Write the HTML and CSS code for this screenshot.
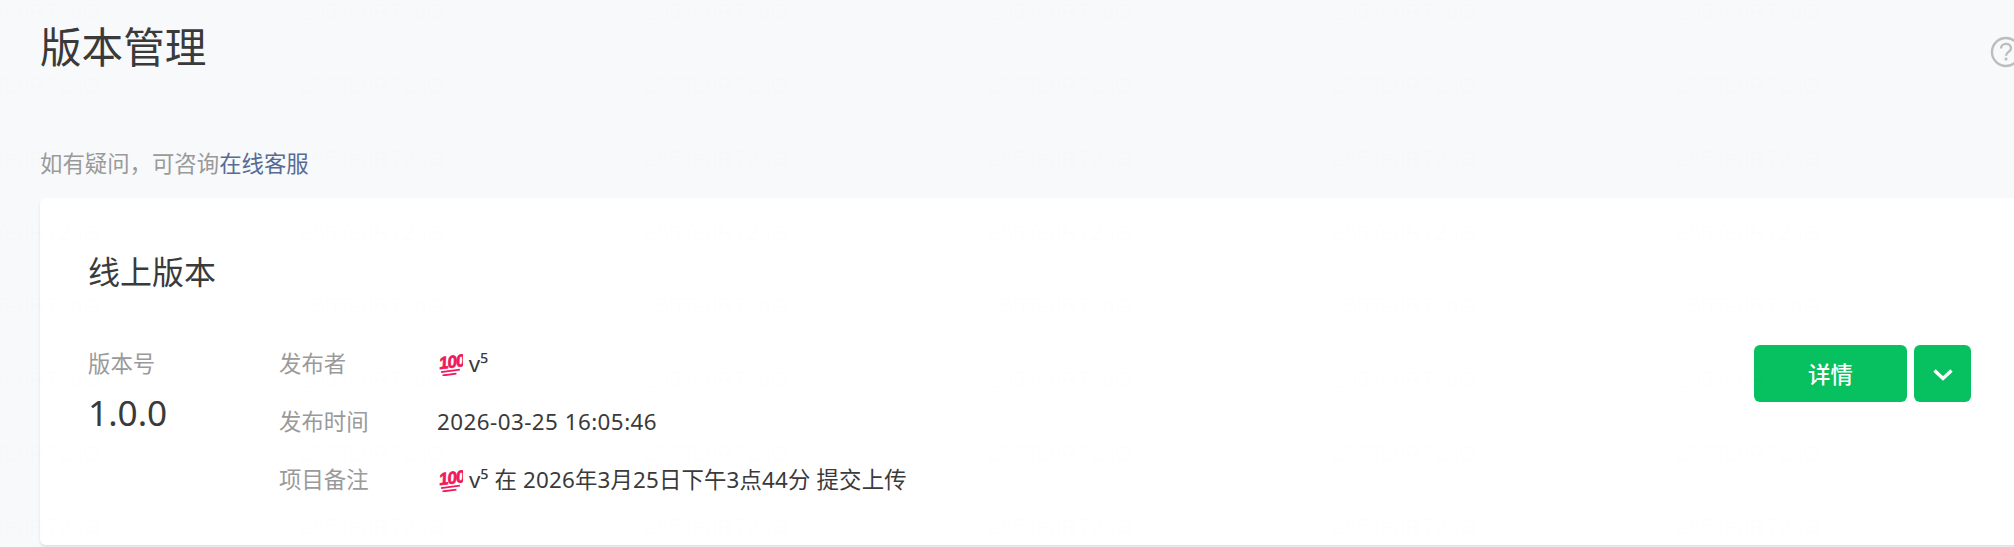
FILE: index.html
```html
<!DOCTYPE html>
<html lang="zh-CN">
<head>
    <meta charset="UTF-8">
    <title>版本管理</title>
    <link rel="stylesheet" href="styles.css">
</head>
<body>
    <div class="page">
        <div class="page-head">
            <h1>版本管理</h1>
            <svg class="help-icon" width="32" height="32" viewBox="0 0 32 32" fill="none" stroke="#bdbdbd">
                <circle cx="16" cy="16" r="14" stroke-width="2.4"/>
                <path d="M11 12.5c0-2.8 2.2-4.6 5-4.6s5 1.7 5 4.3c0 3.6-5 3.8-5 7.6" stroke-width="2.4"/>
                <path d="M16 21.6v2.8" stroke-width="2.8"/>
            </svg>
        </div>
        <p class="tip">如有疑问，可咨询<a class="tip-link">在线客服</a></p>
        <div class="card">
            <h2>线上版本</h2>
            <div class="card-body">
                <div class="version">
                    <div class="label">版本号</div>
                    <div class="version-num">1.0.0</div>
                </div>
                <div class="info">
                    <div class="info-row">
                        <span class="label info-label">发布者</span>
                        <span class="info-value"><svg class="emoji" width="26" height="24" viewBox="0 0 26 24"><g transform="rotate(-8 12 12)"><text x="2" y="16" class="emoji-text">100</text><path d="M3 19h19M4 22.5h14"/></g></svg> v⁵</span>
                    </div>
                    <div class="info-row">
                        <span class="label info-label">发布时间</span>
                        <span class="info-value info-date">2026-03-25 16:05:46</span>
                    </div>
                    <div class="info-row">
                        <span class="label info-label">项目备注</span>
                        <span class="info-value info-note"><svg class="emoji" width="26" height="24" viewBox="0 0 26 24"><g transform="rotate(-8 12 12)"><text x="2" y="16" class="emoji-text">100</text><path d="M3 19h19M4 22.5h14"/></g></svg> v⁵ 在 2026年3月25日下午3点44分 提交上传</span>
                    </div>
                </div>
                <div class="actions">
                    <button class="btn btn-main">详情</button>
                    <button class="btn btn-more">
                        <svg width="22" height="14" viewBox="0 0 22 14" fill="none" stroke="#fff" stroke-width="3.4"><path d="M2.5 2.5l8.5 8 8.500-8"/></svg>
                    </button>
                </div>
            </div>
        </div>
    </div>
    <div class="watermark">
        <div class="watermark-grid"></div>
    </div>
    <script>
        const watermarkGrid = document.querySelector('.watermark-grid');
        for (let i = 0; i < 8 * 6; i++) {
            const item = document.createElement('span');
            item.textContent = '255TedR72aG';
            watermarkGrid.appendChild(item);
        }
    </script>
</body>
</html>
```

FILE: styles.css
```css
body {
    margin: 0;
    height: 547px;
    overflow: hidden;
    background-color: #f8f9fb;
    font-family: "Noto Sans", "Noto Sans CJK SC", sans-serif;
    color: #3a3a3a;
}

.page {
    width: 2060px;
    padding-left: 40px;
}

.page-head {
    display: flex;
    justify-content: space-between;
    align-items: center;
    height: 94px;
}

h1 {
    margin: 0;
    font-size: 41.6px;
    font-weight: 400;
    line-height: 94px;
}

.help-icon {
    flex: none;
    margin: 10px 78px 0 0;
}

.tip {
    margin: 54px 0 0;
    font-size: 22.4px;
    line-height: 32px;
    color: #9a9a9a;
}

.tip-link {
    color: #576b95;
}

.card {
    margin-top: 18px;
    height: 347px;
    box-sizing: border-box;
    padding: 50px 48px 0;
    background-color: #fff;
    border-radius: 6px;
    box-shadow: 0 2px 3px rgba(0, 0, 0, 0.1);
}

h2 {
    margin: 0;
    font-size: 32px;
    font-weight: 400;
    line-height: 48px;
}

.card-body {
    display: flex;
    margin-top: 52px;
}

.label {
    font-size: 22.4px;
    line-height: 32px;
    color: #9a9a9a;
}

.version {
    width: 191px;
}

.version-num {
    margin-top: 7px;
    font-size: 35.2px;
    line-height: 50px;
}

.info {
    width: 1475px;
}

.info-row {
    display: flex;
    height: 58px;
    align-items: flex-start;
}

.info-label {
    width: 158px;
}

.info-value {
    font-size: 22.4px;
    line-height: 32px;
}

.info-date {
    letter-spacing: 0.45px;
}

.info-note {
    letter-spacing: 0.16px;
}

.emoji {
    vertical-align: -4px;
}

.emoji path {
    fill: none;
    stroke: #ee1a5c;
    stroke-width: 1.8;
}

.emoji-text {
    font-family: "Liberation Sans", sans-serif;
    font-size: 17px;
    font-weight: 700;
    font-style: italic;
    letter-spacing: -0.8px;
    fill: #ee1a5c;
    stroke: #ee1a5c;
    stroke-width: 0.7;
}

.actions {
    display: flex;
    gap: 7px;
    margin-top: -3px;
}

.btn {
    height: 57px;
    border: none;
    border-radius: 6px;
    background-color: #07c160;
    color: #fff;
    font-family: inherit;
    font-size: 22.4px;
    font-weight: 500;
}

.btn-main {
    width: 153px;
}

.btn-more {
    width: 57px;
    padding: 0;
}

/* faint tiled text over the whole page */
.watermark {
    position: fixed;
    inset: 0;
    overflow: hidden;
    pointer-events: none;
}

.watermark-grid {
    display: grid;
    grid-template-columns: repeat(6, 344px);
    grid-auto-rows: 73.6px;
    margin-left: -44px;
    font-family: "Liberation Sans", sans-serif;
    font-size: 22.4px;
    line-height: 24px;
    color: rgba(0, 0, 0, 0.006);
}
```
